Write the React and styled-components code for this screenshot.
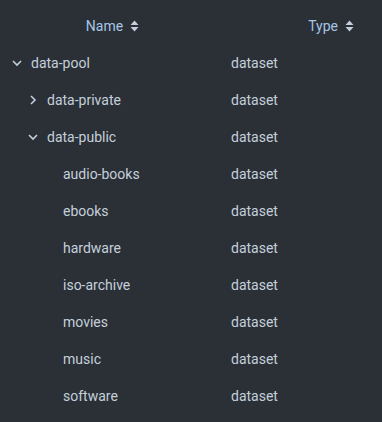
import React from "react";
import styled, { createGlobalStyle } from "styled-components";

const GlobalStyle = createGlobalStyle`
  html, body {
    margin: 0;
    padding: 0;
    background: #2b2f36;
  }
  body {
    font-family: Roboto, "Liberation Sans", sans-serif;
    font-size: 14px;
    color: #c4cfdb;
  }
`;

const Table = styled.div`
  width: 382px;
  height: 422px;
  background: #2b2f36;
  padding-top: 8px;
  box-sizing: border-box;
`;

const Row = styled.div`
  display: grid;
  grid-template-columns: 231px 1fr;
  height: 37px;
  align-items: center;
`;

const HeaderRow = styled(Row)`
  height: 36px;
`;

const HeaderCell = styled.div`
  display: flex;
  align-items: center;
  justify-content: ${(p) => (p.$align === "end" ? "flex-end" : "center")};
  padding-right: ${(p) => (p.$align === "end" ? "28px" : "6px")};
  gap: 7px;
  color: #a6c5e6;
`;

const NameCell = styled.div`
  display: flex;
  align-items: center;
  padding-left: ${(p) => p.$indent}px;
`;

const Toggle = styled.span`
  width: 19px;
  display: inline-flex;
  align-items: center;
  flex-shrink: 0;
`;

const TypeCell = styled.div``;

const SortIcon = () => (
  <svg width="9" height="12" viewBox="0 0 9 12">
    <path d="M4.5 0.5 L8.5 5 H0.5 Z M4.5 11.5 L8.5 7 H0.5 Z" fill="#c4cfdb" />
  </svg>
);

const Chevron = ({ open }) => (
  <svg width="10" height="10" viewBox="0 0 10 10">
    <path
      d={open ? "M1 3 L5 7 L9 3" : "M3 1 L7 5 L3 9"}
      fill="none"
      stroke="#c4cfdb"
      strokeWidth="1.6"
    />
  </svg>
);

const rows = [
  { name: "data-pool", level: 0, toggle: "open" },
  { name: "data-private", level: 1, toggle: "closed" },
  { name: "data-public", level: 1, toggle: "open" },
  { name: "audio-books", level: 2 },
  { name: "ebooks", level: 2 },
  { name: "hardware", level: 2 },
  { name: "iso-archive", level: 2 },
  { name: "movies", level: 2 },
  { name: "music", level: 2 },
  { name: "software", level: 2 },
];

export default function App() {
  return (
    <>
      <GlobalStyle />
      <Table>
        <HeaderRow>
          <HeaderCell>
            Name <SortIcon />
          </HeaderCell>
          <HeaderCell $align="end">
            Type <SortIcon />
          </HeaderCell>
        </HeaderRow>
        {rows.map((r) => (
          <Row key={r.name}>
            <NameCell $indent={12 + r.level * 16}>
              <Toggle>{r.toggle && <Chevron open={r.toggle === "open"} />}</Toggle>
              {r.name}
            </NameCell>
            <TypeCell>dataset</TypeCell>
          </Row>
        ))}
      </Table>
    </>
  );
}
